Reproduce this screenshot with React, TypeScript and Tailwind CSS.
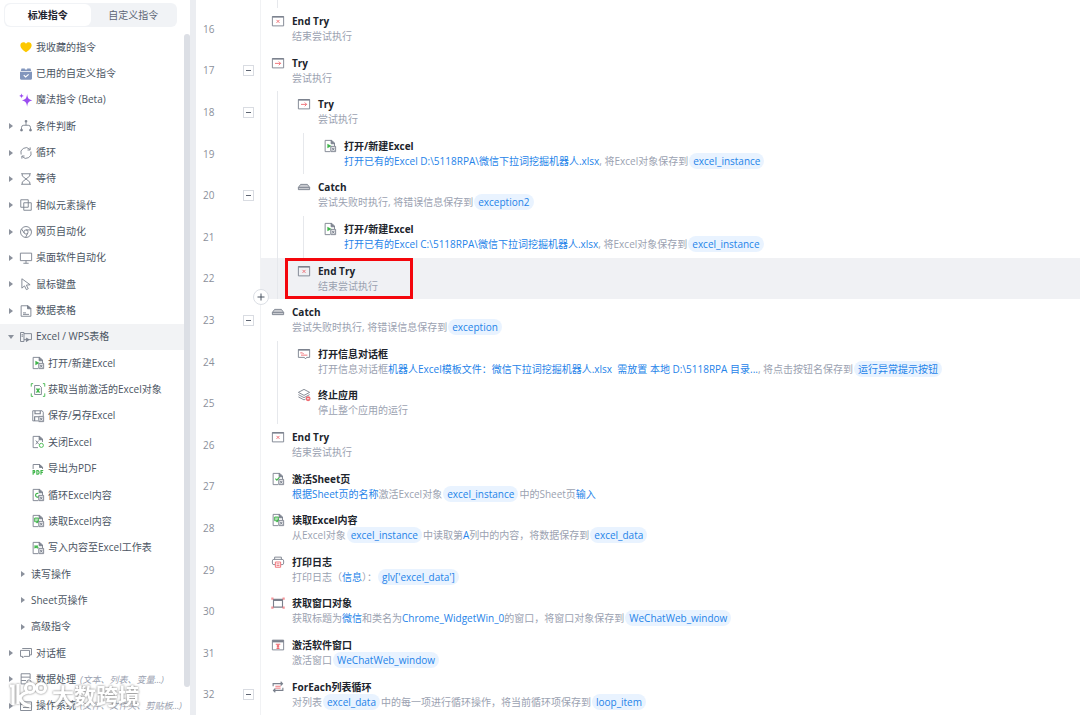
import type { ReactNode } from "react";

const INK = "#7b818d";
const GREEN = "#3fb54a";
const RED = "#ee6a70";

type IconProps = { children: ReactNode; size?: string };

function Icon({ children, size = "w-3 h-3" }: IconProps) {
  return (
    <svg
      viewBox="0 0 16 16"
      className={`${size} shrink-0 overflow-visible`}
      fill="none"
      stroke={INK}
      strokeWidth="1.2"
      aria-hidden="true"
    >
      {children}
    </svg>
  );
}

const page = (
  <>
    <path d="M8 15.500H1.500V.500h9L14 4v4" />
    <path d="M9.500.500V5H14z" fill={INK} />
  </>
);

const excelBadge = (
  <>
    <path d="M9 8.500h6.500v7H9z" fill="#e4e5e8" />
    <path d="M10.800 10.500l3 3.500M13.800 10.500l-3 3.500" />
  </>
);

const frame = (
  <>
    <path d="M.5 2h15v12.500H.5z" />
    <path d="M.5 2.500h15" strokeWidth="2" />
  </>
);

const icons: Record<string, ReactNode> = {
  heart: (
    <path
      d="M8 15C4 12 .5 9.500.500 5.500.500 1.500 5.500 0 8 3.500 10.500 0 15.500 1.500 15.500 5.500 15.500 9.500 12 12 8 15z"
      fill="#fcc800"
      stroke="none"
    />
  ),
  used: (
    <>
      <path d="M0 5h16v9a1.500 1.500 0 0 1-1.500 1.500h-13A1.500 1.500 0 0 1 0 14z" fill="#8296bd" stroke="none" />
      <path d="M1 4l1-3.500h4.500V2h3V.500H14L15 4z" fill="#8296bd" stroke="none" />
      <path d="M5 9.500l2.500 2.500 4-3.500" stroke="#fff" strokeWidth="1.600" />
    </>
  ),
  magic: (
    <>
      <path d="M9.500 0c.7 5.500 1.700 7.300 7 8.500-5.300 1.200-6.300 3-7 8.500-.7-5.500-1.700-7.300-7-8.500 5.300-1.200 6.300-3 7-8.500z" fill="#9b4df0" stroke="none" />
      <path d="M2-1c.3 2.300.9 3 3.200 3.500C2.900 3 2.300 3.700 2 6 1.700 3.700 1.100 3-1.200 2.500 1.100 2 1.700 1.300 2-1z" fill="#9b4df0" stroke="none" />
    </>
  ),
  branch: (
    <>
      <path d="M8 3v4M2 12.500V10q0-3 3-3h6q3 0 3 3v2.500" />
      <path d="M7 .800h2v2H7zM1 12.500h2v2H1zM13 12.500h2v2h-2z" fill={INK} />
    </>
  ),
  loop: (
    <>
      <path d="M1.500 10A6.800 6.800 0 0 1 13 3.200M14.500 6A6.800 6.800 0 0 1 3 12.800" />
      <path d="M13.500.500v3.500H10M2.500 15.500V12H6" />
    </>
  ),
  wait: <path d="M1.500 1h13M1.500 15h13M3 1v3l5 4 5-4V1M3 15v-3l5-4 5 4v3" />,
  similar: <path d="M1 1h10v10H1zM5 5h10v10H5z" />,
  chrome: (
    <>
      <circle cx="8" cy="8" r="7.300" />
      <circle cx="8" cy="8" r="2.800" />
      <path d="M8 5.200h6.700M5.600 9.400L2 4M10.400 9.400L7.500 15" />
    </>
  ),
  desktop: <path d="M.5 1.500h15v10H.5zM8 11.500V15M4.500 15h7" />,
  mouse: <path d="M2.500 1v12.500L6 10.500l2.500 5 2.500-1.200L8.500 9.500l5-.5z" />,
  sheet: (
    <>
      <path d="M1.500 1h9.500l3.500 3.500V15h-13z" />
      <path d="M10 1v4h4.500z" fill={INK} />
      <path d="M4 10.500h4M4 12.500h8" />
    </>
  ),
  excel: (
    <>
      <path d="M.7 2h4.600v12H.7z" />
      <path d="M5.300 3.500h10v8H12M5.300 11.500H8M2 7h2M2 5h2" />
      <path d="M8.500 9.500l3.500 2-3.500 2.500z" fill={INK} />
    </>
  ),
  open: (
    <>
      {page}
      <path d="M4.500 5v6l5.500-3z" fill={GREEN} stroke="none" />
      {excelBadge}
    </>
  ),
  active: (
    <>
      <path d="M3.500 2h6.500l2.500 2.500V14h-9z" />
      <path d="M6 6l4 5.500M10 6l-4 5.500" stroke={GREEN} strokeWidth="1.800" />
      <path d="M1.500-.500H-1v4M-1 12.500v4h2.500M14.500-.500H17v4M17 12.500v4h-2.500" stroke={GREEN} />
    </>
  ),
  save: (
    <>
      <path d="M8 14.500H1V1h12.500L15 3v5" />
      <path d="M4 1v4h7V1M3.500 14.500V9H9" strokeWidth="1.500" />
      {excelBadge}
    </>
  ),
  close: (
    <>
      {page}
      <path d="M5 6l4 5M9 6l-4 5" />
      <circle cx="12.500" cy="12.500" r="2.700" stroke={GREEN} fill="#fff" />
    </>
  ),
  pdf: (
    <>
      <path d="M1.500 8V2h9l3.500 3.500V8" />
      <path d="M10 2v4h4z" fill={INK} />
      <path
        d="M1.500 15.500V10h1.500q1.500 1.500 0 3H1.500M6.500 10v5H8q3-2.500 0-5zM12 15.500V10h3M12 12.500h2.500"
        stroke={GREEN}
        strokeWidth="1.500"
      />
    </>
  ),
  loopExcel: (
    <>
      {page}
      <path d="M10 8.500A2.600 2.600 0 1 1 8.500 6" stroke={GREEN} strokeWidth="1.600" />
      {excelBadge}
    </>
  ),
  read: (
    <>
      {page}
      <path d="M3.500 4h5v5h-5z" fill="#b5deb9" stroke={GREEN} />
      <path d="M6 10.500l3-3" stroke={GREEN} strokeWidth="2" />
      {excelBadge}
    </>
  ),
  write: (
    <>
      {page}
      <path d="M3 5.500h5M3 8l3.500-1.500M6.500 8.500l2-2" stroke={GREEN} strokeWidth="1.500" />
      {excelBadge}
    </>
  ),
  check: (
    <>
      {page}
      <path d="M4.500 7.500l2 2 3.500-4" stroke={GREEN} strokeWidth="1.500" />
      {excelBadge}
    </>
  ),
  dialog: (
    <>
      <path d="M.7 4.500h12v8H5.500L3.500 14.500v-2H.700z" />
      <path d="M3 2h12.300v8.500h-2.500" />
    </>
  ),
  data: (
    <>
      <path d="M8 14.500H1.500V1h12v7M1.500 5.500h12M1.500 10H8" />
      <circle cx="12" cy="12" r="2.800" />
    </>
  ),
  system: <path d="M.7 2.500h14.600v11.500H.700zM.7 6h14.600M4 10h8" />,
  endTry: (
    <>
      {frame}
      <path d="M6 6.500l4 4M10 6.500l-4 4" stroke={RED} />
    </>
  ),
  try: (
    <>
      {frame}
      <path d="M4 8.500h7.500M9 6l2.500 2.500L9 11" stroke={RED} />
    </>
  ),
  catch: (
    <path d="M3.500 4.500h9l3 4v3H.500v-3zM.5 8.500h15" fill="#c9cbd0" />
  ),
  message: (
    <>
      <path d="M.5 2h15v10.500h-4l-1.500 2-1.500-2H.5z" />
      <path d="M.5 2.500h15" strokeWidth="2" />
      <path d="M3 6.500h3l1.500 1.500M4 9.500h8.500" stroke={RED} />
    </>
  ),
  stop: (
    <>
      <path d="M8 .5l7.500 4L8 8.500.500 4.500zM.5 7.500l7.500 4 7.500-4M.5 10.500l7.500 4 2-1" />
      <circle cx="13.500" cy="13" r="3.200" fill={RED} stroke="none" />
      <path d="M12 13h3" stroke="#fff" />
    </>
  ),
  print: (
    <>
      <path d="M3.500 4.500V1.500h9v3M4 11.500H2.500Q.500 11.500.500 9.500v-3q0-2 2-2h11q2 0 2 2v3q0 2-2 2H12" />
      <path d="M4.500 8h7v7h-7z" stroke={RED} />
      <path d="M6 10.500h4M6 12.800h4" stroke={RED} />
    </>
  ),
  window: (
    <>
      <path d="M2 3h12v10.500H2zM2 4.500h12" strokeWidth="1.500" />
      <path d="M-1 .500h3v3h-3zM14 .500h3v3h-3zM-1 12.500h3v3h-3zM14 12.500h3v3h-3z" fill={RED} fillOpacity=".7" stroke="none" />
    </>
  ),
  software: (
    <>
      <path d="M.5 1.500h15v13H.5z" />
      <path d="M.5 3h15" strokeWidth="3" />
      <path d="M5 7h6M8 12.500V9M6 12.500h4M6.500 10L8 8.500 9.500 10" stroke={RED} strokeWidth="1.600" />
    </>
  ),
  forEach: (
    <>
      <path d="M1.500 7V3.500H14M11.500 1L14 3.500 11.500 6M14.500 9v3.500H2M4.500 10L2 12.500 4.500 15" strokeWidth="1.500" />
      <path d="M4.500 7h7M4.500 9.500h7" stroke={RED} />
    </>
  ),
};

type MenuItem = {
  label: string;
  icon?: string;
  level?: "sub" | "leaf";
  arrow?: boolean;
  open?: boolean;
  note?: string;
};

const menu: MenuItem[] = [
  { label: "我收藏的指令", icon: "heart" },
  { label: "已用的自定义指令", icon: "used" },
  { label: "魔法指令 (Beta)", icon: "magic" },
  { label: "条件判断", icon: "branch", arrow: true },
  { label: "循环", icon: "loop", arrow: true },
  { label: "等待", icon: "wait", arrow: true },
  { label: "相似元素操作", icon: "similar", arrow: true },
  { label: "网页自动化", icon: "chrome", arrow: true },
  { label: "桌面软件自动化", icon: "desktop", arrow: true },
  { label: "鼠标键盘", icon: "mouse", arrow: true },
  { label: "数据表格", icon: "sheet", arrow: true },
  { label: "Excel / WPS表格", icon: "excel", arrow: true, open: true },
  { label: "打开/新建Excel", icon: "open", level: "leaf" },
  { label: "获取当前激活的Excel对象", icon: "active", level: "leaf" },
  { label: "保存/另存Excel", icon: "save", level: "leaf" },
  { label: "关闭Excel", icon: "close", level: "leaf" },
  { label: "导出为PDF", icon: "pdf", level: "leaf" },
  { label: "循环Excel内容", icon: "loopExcel", level: "leaf" },
  { label: "读取Excel内容", icon: "read", level: "leaf" },
  { label: "写入内容至Excel工作表", icon: "write", level: "leaf" },
  { label: "读写操作", level: "sub", arrow: true },
  { label: "Sheet页操作", level: "sub", arrow: true },
  { label: "高级指令", level: "sub", arrow: true },
  { label: "对话框", icon: "dialog", arrow: true },
  { label: "数据处理", icon: "data", arrow: true, note: "(文本、列表、变量...)" },
  { label: "操作系统", icon: "system", arrow: true, note: "(文件、文件夹、剪贴板...)" },
];

function Param({ children }: { children: ReactNode }) {
  return <span className="text-[#2583e9]">{children}</span>;
}

function Variable({ children }: { children: ReactNode }) {
  return (
    <span className="mx-px rounded-full bg-[#e9f3ff] px-1 py-px text-[#2583e9]">
      {children}
    </span>
  );
}

type Step = {
  line: number;
  title: string;
  icon: string;
  depth: 0 | 1 | 2;
  text: ReactNode;
  foldable?: boolean;
  selected?: boolean;
};

const steps: Step[] = [
  { line: 16, title: "End Try", icon: "endTry", depth: 0, text: "结束尝试执行" },
  { line: 17, title: "Try", icon: "try", depth: 0, text: "尝试执行", foldable: true },
  { line: 18, title: "Try", icon: "try", depth: 1, text: "尝试执行", foldable: true },
  {
    line: 19,
    title: "打开/新建Excel",
    icon: "open",
    depth: 2,
    text: (
      <>
        <Param>打开已有的Excel D:\5118RPA\微信下拉词挖掘机器人.xlsx</Param>, 将Excel对象保存到
        <Variable>excel_instance</Variable>
      </>
    ),
  },
  {
    line: 20,
    title: "Catch",
    icon: "catch",
    depth: 1,
    foldable: true,
    text: (
      <>
        尝试失败时执行, 将错误信息保存到<Variable>exception2</Variable>
      </>
    ),
  },
  {
    line: 21,
    title: "打开/新建Excel",
    icon: "open",
    depth: 2,
    text: (
      <>
        <Param>打开已有的Excel C:\5118RPA\微信下拉词挖掘机器人.xlsx</Param>, 将Excel对象保存到
        <Variable>excel_instance</Variable>
      </>
    ),
  },
  { line: 22, title: "End Try", icon: "endTry", depth: 1, text: "结束尝试执行", selected: true },
  {
    line: 23,
    title: "Catch",
    icon: "catch",
    depth: 0,
    foldable: true,
    text: (
      <>
        尝试失败时执行, 将错误信息保存到<Variable>exception</Variable>
      </>
    ),
  },
  {
    line: 24,
    title: "打开信息对话框",
    icon: "message",
    depth: 1,
    text: (
      <>
        打开信息对话框
        <Param>机器人Excel模板文件：微信下拉词挖掘机器人.xlsx&nbsp; 需放置 本地 D:\5118RPA 目录...</Param>
        , 将点击按钮名保存到<Variable>运行异常提示按钮</Variable>
      </>
    ),
  },
  { line: 25, title: "终止应用", icon: "stop", depth: 1, text: "停止整个应用的运行" },
  { line: 26, title: "End Try", icon: "endTry", depth: 0, text: "结束尝试执行" },
  {
    line: 27,
    title: "激活Sheet页",
    icon: "check",
    depth: 0,
    text: (
      <>
        <Param>根据Sheet页的名称</Param>激活Excel对象<Variable>excel_instance</Variable>中的Sheet页
        <Param>输入</Param>
      </>
    ),
  },
  {
    line: 28,
    title: "读取Excel内容",
    icon: "read",
    depth: 0,
    text: (
      <>
        从Excel对象<Variable>excel_instance</Variable>中读取第<Param>A</Param>
        列中的内容，将数据保存到<Variable>excel_data</Variable>
      </>
    ),
  },
  {
    line: 29,
    title: "打印日志",
    icon: "print",
    depth: 0,
    text: (
      <>
        打印日志（<Param>信息</Param>）：<Variable>glv['excel_data']</Variable>
      </>
    ),
  },
  {
    line: 30,
    title: "获取窗口对象",
    icon: "window",
    depth: 0,
    text: (
      <>
        获取标题为<Param>微信</Param>和类名为<Param>Chrome_WidgetWin_0</Param>
        的窗口，将窗口对象保存到<Variable>WeChatWeb_window</Variable>
      </>
    ),
  },
  {
    line: 31,
    title: "激活软件窗口",
    icon: "software",
    depth: 0,
    text: (
      <>
        激活窗口<Variable>WeChatWeb_window</Variable>
      </>
    ),
  },
  {
    line: 32,
    title: "ForEach列表循环",
    icon: "forEach",
    depth: 0,
    foldable: true,
    text: (
      <>
        对列表<Variable>excel_data</Variable>中的每一项进行循环操作，将当前循环项保存到
        <Variable>loop_item</Variable>
      </>
    ),
  },
];

function MenuRow({ item }: { item: MenuItem }) {
  const indent =
    item.level === "leaf" ? "pl-8" : item.level === "sub" ? "pl-5" : "pl-2";
  return (
    <li className={`flex min-h-6 flex-1 ${item.open ? "bg-[#f2f3f5]" : ""}`}>
      <button
        type="button"
        aria-expanded={item.arrow ? Boolean(item.open) : undefined}
        className={`flex w-full items-center whitespace-nowrap text-left text-[#4b5563] ${indent}`}
      >
        {item.level !== "leaf" && (
          <span className={`shrink-0 ${item.level === "sub" ? "w-[11px]" : "w-3"}`}>
            {item.arrow && (
              <svg
                viewBox="0 0 6 6"
                className={`h-1.5 w-1.5 fill-[#8b919c] ${item.open ? "rotate-90" : ""}`}
                aria-hidden="true"
              >
                <path d="M1 0l4 3-4 3z" />
              </svg>
            )}
          </span>
        )}
        {item.icon && <Icon>{icons[item.icon]}</Icon>}
        <span className={item.icon ? "ml-1" : ""}>{item.label}</span>
        {item.note && (
          <span className="ml-1 text-[9px] italic text-[#9aa1b0]">{item.note}</span>
        )}
      </button>
    </li>
  );
}

function Sidebar() {
  return (
    <aside className="flex w-[196px] shrink-0 flex-col border-r-6 border-[#ebedf1] bg-white">
      <div className="pt-[3px] pb-[7px] pl-1">
        <div role="tablist" className="flex h-6 w-[173px] rounded-md bg-[#f1f3f6] p-px">
          <button
            type="button"
            role="tab"
            aria-selected="true"
            className="flex-1 rounded-md bg-white font-bold text-[#1f2430]"
          >
            标准指令
          </button>
          <button
            type="button"
            role="tab"
            aria-selected="false"
            className="flex-1 rounded-md text-[#5b6474]"
          >
            自定义指令
          </button>
        </div>
      </div>
      <div className="-mb-1 flex flex-1">
        <ul className="flex w-[184px] flex-col">
          {menu.map((item) => (
            <MenuRow key={item.label} item={item} />
          ))}
        </ul>
        <div className="mb-8 flex-1 rounded-full bg-[#dcdfe5]" aria-hidden="true" />
      </div>
    </aside>
  );
}

function Guides({ depth }: { depth: number }) {
  return (
    <>
      {Array.from({ length: depth }, (_, i) => (
        <span key={i} className="ml-4 w-2.5 shrink-0 border-l border-[#e6e8ec]" />
      ))}
    </>
  );
}

function StepRow({ step }: { step: Step }) {
  return (
    <li className="flex min-h-10 flex-1">
      <div className="flex w-16 shrink-0 items-center justify-between pt-px pr-1.5 pl-[7px] text-[#8b909b]">
        <span>{step.line}</span>
        {step.foldable && (
          <button
            type="button"
            aria-label="折叠"
            className="flex h-[11px] w-[11px] items-center justify-center border border-[#d9dce2]"
          >
            <span className="h-px w-[5px] bg-[#5f6673]" />
          </button>
        )}
      </div>
      <div
        className={`relative flex min-w-0 flex-1 border-l border-[#f1f2f4] ${step.selected ? "bg-[#f0f1f4]" : ""}`}
      >
        <Guides depth={step.depth} />
        <div className="min-w-0 pt-[5px] pl-[11px]">
          <div className="flex items-center leading-4">
            <Icon>{icons[step.icon]}</Icon>
            <h3 className="ml-2 font-bold text-[#20242c]">{step.title}</h3>
          </div>
          <p className="pl-5 leading-[15px] whitespace-nowrap text-[#9ba2b1]">{step.text}</p>
        </div>
        {step.selected && (
          <>
            <div className="absolute inset-y-0 left-6 w-32 border-3 border-[#f4060c]" />
            <button
              type="button"
              aria-label="添加指令"
              className="absolute -bottom-1.5 -left-2 z-10 flex h-4 w-4 items-center justify-center rounded-full border border-[#dcdfe5] bg-white"
            >
              <svg viewBox="0 0 8 8" className="h-2 w-2" stroke="#4b5563" aria-hidden="true">
                <path d="M4 .5v7M.5 4h7" />
              </svg>
            </button>
          </>
        )}
      </div>
    </li>
  );
}

function Watermark() {
  return (
    <div className="pointer-events-none absolute bottom-1.5 left-2 flex items-center gap-1 drop-shadow-[0_0_1px_#777]">
      <svg viewBox="0 0 40 28" className="h-7 w-10" fill="none" stroke="#fff" strokeWidth="3.200" aria-hidden="true">
        <path d="M2 5h3v19M10 3v20M20 11q-7 2-8 6 2 7 11 8" />
        <circle cx="22" cy="7" r="4.500" />
        <circle cx="33" cy="7" r="4.500" />
      </svg>
      <span className="text-[22px] leading-7 font-bold text-white">大数跨境</span>
    </div>
  );
}

export default function App() {
  return (
    <div className="relative flex min-h-screen overflow-hidden bg-white font-['Open_Sans','Noto_Sans_CJK_SC',sans-serif] text-[10px]">
      <Sidebar />
      <main className="flex min-w-0 flex-1 flex-col">
        <div className="flex h-2 pl-16">
          <div className="flex border-l border-[#f1f2f4]">
            <Guides depth={1} />
          </div>
        </div>
        <ol className="flex flex-1 flex-col">
          {steps.map((step) => (
            <StepRow key={step.line} step={step} />
          ))}
        </ol>
      </main>
      <Watermark />
    </div>
  );
}
